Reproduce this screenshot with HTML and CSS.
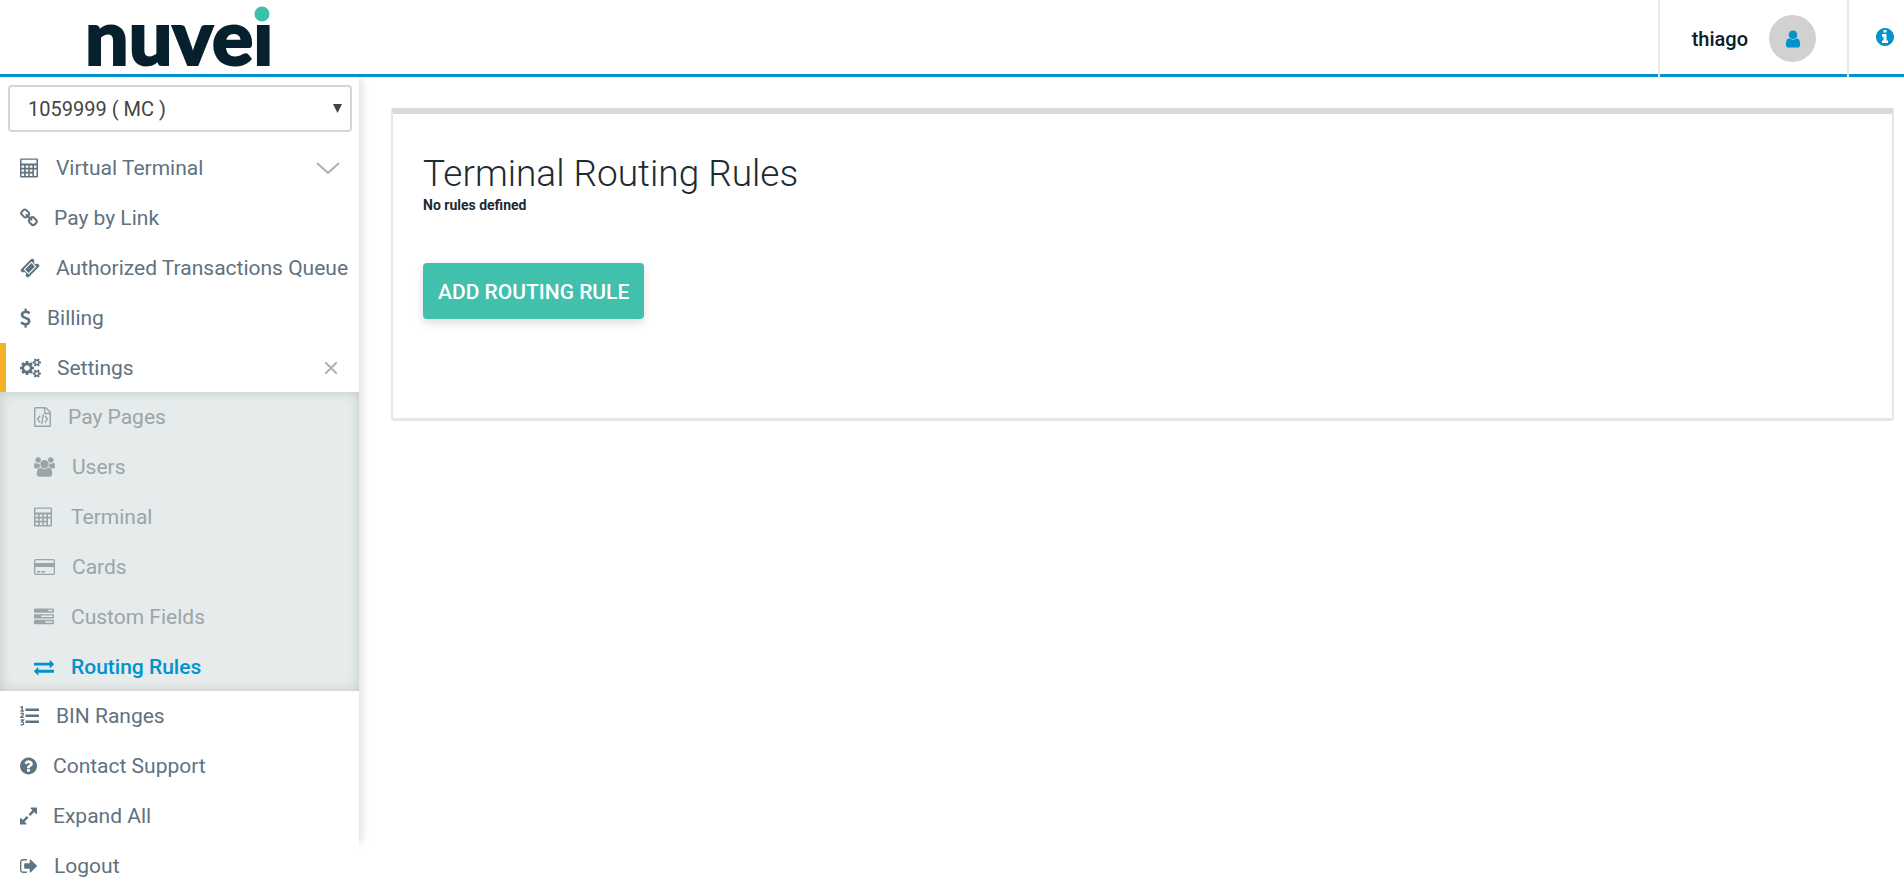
FILE: index.html
```html
<!DOCTYPE html>
<html lang="en">
<head>
<meta charset="utf-8">
<title>Terminal Routing Rules</title>
<meta name="viewport" content="width=device-width, initial-scale=1">
<link rel="stylesheet" href="styles.css">
</head>
<body>
<svg class="sprite" aria-hidden="true">
  <symbol id="calculator" viewBox="0 0 20 20"><path fill-rule="evenodd" d="M1 0.500h16a1 1 0 0 1 1 1v17a1 1 0 0 1-1 1H1a1 1 0 0 1-1-1v-17a1 1 0 0 1 1-1zM1.500 1.800v3.700h15V1.800zM1.500 7.500v2.300h2.600V7.500zM5.700 7.500v2.300h2.600V7.500zM9.800 7.500v2.300h2.600V7.500zM14 7.500v2.300h2.500V7.500zM1.500 11.500v2.300h2.600v-2.300zM5.700 11.500v2.300h2.600v-2.300zM9.800 11.500v2.300h2.600v-2.300zM14 11.500v6.500h2.500v-6.500zM1.500 15.600V18h2.600v-2.400zM5.700 15.600V18h2.600v-2.400zM9.800 15.600V18h2.600v-2.400z"/></symbol>
  <symbol id="link" viewBox="64 0 1664 1792"><path d="M1520 1216q0-40-28-68l-208-208q-28-28-68-28-42 0-72 32 3 3 19 18.500t21.500 21.500 15 19 13 25.500 3.500 27.500q0 40-28 68t-68 28q-15 0-27.500-3.500t-25.500-13-19-15-21.500-21.500-18.500-19q-33 31-33 73 0 40 28 68l206 207q27 27 68 27 40 0 68-26l147-146q28-28 28-67zm-703-705q0-40-28-68l-206-207q-28-28-68-28-39 0-68 27l-147 146q-28 28-28 67 0 40 28 68l208 208q27 27 68 27 42 0 72-31-3-3-19-18.500t-21.500-21.500-15-19-13-25.500-3.500-27.500q0-40 28-68t68-28q15 0 27.500 3.500t25.500 13 19 15 21.500 21.500 18.500 19q33-31 33-73zm895 705q0 120-85 203l-147 146q-83 83-203 83-121 0-204-85l-206-207q-83-83-83-203 0-123 88-209l-88-88q-86 88-208 88-120 0-204-84l-208-208q-84-84-84-204t85-203l147-146q83-83 203-83 121 0 204 85l206 207q83 83 83 203 0 123-88 209l88 88q86-88 208-88 120 0 204 84l208 208q84 84 84 204z"/></symbol>
  <symbol id="ticket" viewBox="0 0 1792 1792"><path d="M1024 452l316 316-572 572-316-316zm-211 979l618-618q19-19 19-45t-19-45l-362-362q-18-18-45-18t-45 18l-618 618q-19 19-19 45t19 45l362 362q18 18 45 18t45-18zm889-637l-907 908q-37 37-90.500 37t-90.500-37l-126-126q56-56 56-136t-56-136-136-56-136 56l-125-126q-37-37-37-90.500t37-90.500l907-906q37-37 90.500-37t90.500 37l125 125q-56 56-56 136t56 136 136 56 136-56l126 125q37 37 37 90.500t-37 90.500z"/></symbol>
  <symbol id="dollar" viewBox="384 0 1024 1792"><path d="M1362 1185q0 153-99.500 263.500t-258.500 136.500v175q0 14-9 23t-23 9h-135q-13 0-22.500-9.500t-9.500-22.500v-175q-66-9-127.500-31t-101.500-44.500-74-48-46.500-37.500-17.500-18q-17-21-2-41l103-135q7-10 23-12 15-2 24 9l2 2q113 99 243 125 37 8 74 8 81 0 142.500-43t61.500-122q0-28-15-53t-33.500-42-58.500-37.500-66-32-80-32.500q-39-16-61.500-25t-61.500-26.500-62.500-31-56.500-35.500-53.500-42.500-43.500-49-35.500-58-21-66.500-8.500-78q0-138 98-242t255-134v-180q0-13 9.500-22.500t22.500-9.500h135q14 0 23 9t9 23v176q57 6 110.500 23t87 33.500 63.500 37.500 39 29 15 14q17 18 5 38l-81 146q-8 15-23 16-14 3-27-7-3-3-14.500-12t-39-26.500-58.500-32-74.500-26-85.500-11.500q-95 0-155 43t-60 111q0 26 8.500 48t29.500 41.500 39.500 33 56 31 60.500 27 70 27.500q53 20 81 31.500t76 35 75.500 42.500 62 50 53 63.500 31.500 76.500 13 94z"/></symbol>
  <symbol id="cogs" viewBox="-64 0 1920 1792"><path d="M832 896q0-106-75-181t-181-75-181 75-75 181 75 181 181 75 181-75 75-181zm768 512q0-52-38-90t-90-38-90 38-38 90q0 53 37.500 90.500t90.500 37.500 90.500-37.500 37.500-90.500zm0-1024q0-52-38-90t-90-38-90 38-38 90q0 53 37.500 90.500t90.500 37.500 90.500-37.500 37.500-90.500zm-384 421v185q0 10-7 19.500t-16 10.500l-155 24q-11 35-32 76 34 48 90 115 7 11 7 20 0 12-7 19-23 30-82.500 89.500t-78.500 59.500q-11 0-21-7l-115-90q-37 19-77 31-11 108-23 155-7 24-30 24h-186q-11 0-20-7.500t-10-17.500l-23-153q-34-10-75-31l-118 89q-7 7-20 7-11 0-21-8-144-133-144-160 0-9 7-19 10-14 41-53t47-61q-23-44-35-82l-152-24q-10-1-17-9.500t-7-19.500v-185q0-10 7-19.500t16-10.500l155-24q11-35 32-76-34-48-90-115-7-11-7-20 0-12 7-20 22-30 82-89t79-59q11 0 21 7l115 90q34-18 77-32 11-108 23-154 7-24 30-24h186q11 0 20 7.500t10 17.500l23 153q34 10 75 31l118-89q8-7 20-7 11 0 21 8 144 133 144 160 0 8-7 19-12 16-42 54t-45 60q23 48 34 82l152 23q10 2 17 10.500t7 19.500zm640 533v140q0 16-149 31-12 27-30 52 51 113 51 138 0 4-4 7-122 71-124 71-8 0-46-47t-52-68q-20 2-30 2t-30-2q-14 21-52 68t-46 47q-2 0-124-71-4-3-4-7 0-25 51-138-18-25-30-52-149-15-149-31v-140q0-16 149-31 13-29 30-52-51-113-51-138 0-4 4-7 4-2 35-20t59-34 30-16q8 0 46 46.500t52 67.500q20-2 30-2t30 2q51-71 92-112l6-2q4 0 124 70 4 3 4 7 0 25-51 138 17 23 30 52 149 15 149 31zm0-1024v140q0 16-149 31-12 27-30 52 51 113 51 138 0 4-4 7-122 71-124 71-8 0-46-47t-52-68q-20 2-30 2t-30-2q-14 21-52 68t-46 47q-2 0-124-71-4-3-4-7 0-25 51-138-18-25-30-52-149-15-149-31v-140q0-16 149-31 13-29 30-52-51-113-51-138 0-4 4-7 4-2 35-20t59-34 30-16q8 0 46 46.500t52 67.500q20-2 30-2t30 2q51-71 92-112l6-2q4 0 124 70 4 3 4 7 0 25-51 138 17 23 30 52 149 15 149 31z"/></symbol>
  <symbol id="file-code" viewBox="128 0 1536 1792"><path d="M1596 380q28 28 48 76t20 88v1152q0 40-28 68t-68 28h-1344q-40 0-68-28t-28-68v-1600q0-40 28-68t68-28h896q40 0 88 20t76 48zm-444-244v376h376q-10-29-22-41l-313-313q-12-12-41-22zm384 1528v-1024h-416q-40 0-68-28t-28-68v-416h-768v1536h1280z"/><path d="M608 768q8-11 21-12.500t24 6.500l51 38q11 8 12.500 21t-6.500 24l-182 243 182 243q8 11 6.500 24t-12.500 21l-51 38q-11 8-24 6.500t-21-12.500l-226-301q-14-19 0-38zM1410 1069q14 19 0 38l-226 301q-8 11-21 12.500t-24-6.500l-51-38q-11-8-12.500-21t6.500-24l182-243-182-243q-8-11-6.500-24t12.500-21l51-38q11-8 24-6.500t21 12.500zM790 1530q-13-2-20.500-13t-5.500-24l138-831q2-13 13-20.500t24-5.500l63 10q13 2 20.500 13t5.500 24l-138 831q-2 13-13 20.500t-24 5.500z"/></symbol>
  <symbol id="users" viewBox="64 0 1920 1792"><path d="M657 896q-162 5-265 128h-134q-82 0-138-40.500t-56-118.500q0-353 124-353 6 0 43.500 21t97.500 42.500 119 21.500q67 0 133-23-5 37-5 66 0 159 81 256zm1071 637q0 120-73 189.500t-194 69.500h-874q-121 0-194-69.500t-73-189.500q0-53 3.500-103.500t14-109 26.500-108.500 43-97.500 62-81 85.500-53.500 111.500-20q10 0 43 21.500t73 48 107 48 135 21.500 135-21.500 107-48 73-48 43-21.500q61 0 111.500 20t85.500 53.500 62 81 43 97.500 26.500 108.500 14 109 3.500 103.500zm-1024-1277q0 106-75 181t-181 75-181-75-75-181 75-181 181-75 181 75 75 181zm704 384q0 159-112.500 271.500t-271.500 112.500-271.500-112.500-112.500-271.500 112.500-271.500 271.500-112.500 271.500 112.500 112.500 271.500zm576 225q0 78-56 118.500t-138 40.500h-134q-103-123-265-128 81-97 81-256 0-29-5-66 66 23 133 23 59 0 119-21.500t97.500-42.500 43.500-21q124 0 124 353zm-128-609q0 106-75 181t-181 75-181-75-75-181 75-181 181-75 181 75 75 181z"/></symbol>
  <symbol id="card" viewBox="0 0 21 20"><path fill-rule="evenodd" d="M2 2h17a2 2 0 0 1 2 2v12a2 2 0 0 1-2 2H2a2 2 0 0 1-2-2V4a2 2 0 0 1 2-2zM2 3.300q-.7 0-.7.700v2h18.400V4q0-.7-.7-.7zM1.300 10v6q0 .7.700.700h17q.7 0 .7-.7v-6zM3 14h3v1.400H3zM7 14h4v1.400H7z"/></symbol>
  <symbol id="tasks" viewBox="0 0 1792 1792"><path d="M1024 1408h640v-128h-640v128zm-384-512h1024v-128h-1024v128zm640-512h384v-128h-384v128zm512 832v256q0 26-19 45t-45 19h-1664q-26 0-45-19t-19-45v-256q0-26 19-45t45-19h1664q26 0 45 19t19 45zm0-512v256q0 26-19 45t-45 19h-1664q-26 0-45-19t-19-45v-256q0-26 19-45t45-19h1664q26 0 45 19t19 45zm0-512v256q0 26-19 45t-45 19h-1664q-26 0-45-19t-19-45v-256q0-26 19-45t45-19h1664q26 0 45 19t19 45z"/></symbol>
  <symbol id="exchange" viewBox="0 0 1792 1792"><path d="M1792 1184v192q0 13-9.500 22.500t-22.500 9.500h-1376v192q0 13-9.500 22.500t-22.500 9.500q-12 0-24-10l-319-320q-9-9-9-22 0-14 9-23l320-320q9-9 23-9 13 0 22.500 9.500t9.500 22.500v192h1376q13 0 22.500 9.500t9.500 22.500zm0-544q0 14-9 23l-320 320q-9 9-23 9-13 0-22.500-9.500t-9.500-22.500v-192h-1376q-13 0-22.500-9.500t-9.500-22.500v-192q0-13 9.500-22.500t22.500-9.500h1376v-192q0-14 9-23t23-9q12 0 24 10l319 319q9 9 9 23z"/></symbol>
  <symbol id="list" viewBox="0 0 20 20"><path d="M5.500 2.500H19v2.500H5.500zM5.500 8.500H19V11H5.500zM5.500 14.500H19V17H5.500z"/><path fill="none" stroke="currentColor" stroke-width="1.400" d="M.5 1.500L2.200.8v4M.5 5h3.300M.6 7.800q2.700-1.200 2.700.4 0 .8-2.600 3.100h3M.6 14h2.800l-1.500 1.900q1.700 0 1.700 1.500 0 2-3.100 1.300"/></symbol>
  <symbol id="question" viewBox="128 0 1536 1792"><path d="M1024 1376v-192q0-14-9-23t-23-9h-192q-14 0-23 9t-9 23v192q0 14 9 23t23 9h192q14 0 23-9t9-23zm256-672q0-88-55.500-163t-138.500-116-170-41q-243 0-371 213-15 24 8 42l132 100q7 6 19 6 16 0 25-12 53-68 86-92 34-24 86-24 48 0 85.500 26t37.500 59q0 38-20 61t-68 45q-63 28-115.500 86.500t-52.500 125.500v36q0 14 9 23t23 9h192q14 0 23-9t9-23q0-19 21.500-49.500t54.500-49.500q32-18 49-28.500t46-35 44.500-48 28-60.500 12.500-81zm384 192q0 209-103 385.500t-279.500 279.500-385.500 103-385.500-103-279.500-279.500-103-385.500 103-385.500 279.500-279.500 385.500-103 385.500 103 279.500 279.500 103 385.500z"/></symbol>
  <symbol id="expand" viewBox="128 0 1536 1792"><path d="M883 1056q0 13-10 23l-332 332 144 144q19 19 19 45t-19 45-45 19h-448q-26 0-45-19t-19-45v-448q0-26 19-45t45-19 45 19l144 144 332-332q10-10 23-10t23 10l114 114q10 10 10 23zm781-864v448q0 26-19 45t-45 19-45-19l-144-144-332 332q-10 10-23 10t-23-10l-114-114q-10-10-10-23t10-23l332-332-144-144q-19-19-19-45t19-45 45-19h448q26 0 45 19t19 45z"/></symbol>
  <symbol id="logout" viewBox="64 0 1664 1792"><path d="M704 1440q0 4 1 20t.5 26.500-3 23.500-10 19.500-20.500 6.500h-320q-119 0-203.500-84.500t-84.500-203.500v-704q0-119 84.500-203.500t203.500-84.500h320q13 0 22.500 9.500t9.500 22.500q0 4 1 20t.5 26.500-3 23.500-10 19.500-20.500 6.500h-320q-66 0-113 47t-47 113v704q0 66 47 113t113 47h312l11.500 1 11.500 3 8 5.500 7 9 2 13.500zm928-544q0 26-19 45l-544 544q-19 19-45 19t-45-19-19-45v-288h-448q-26 0-45-19t-19-45v-384q0-26 19-45t45-19h448v-288q0-26 19-45t45-19 45 19l544 544q19 19 19 45z"/></symbol>
  <symbol id="user" viewBox="0 0 1792 1792"><path d="M1536 1399q0 109-62.500 187t-150.500 78h-854q-88 0-150.500-78t-62.500-187q0-85 8.500-160.500t31.500-152 58.500-131 94-89 134.500-34.500q131 128 313 128t313-128q76 0 134.500 34.500t94 89 58.500 131 31.500 152 8.500 160.500zm-256-887q0 159-112.500 271.500t-271.500 112.500-271.500-112.500-112.500-271.500 112.500-271.500 271.500-112.500 271.500 112.500 112.500 271.500z"/></symbol>
  <symbol id="info" viewBox="128 128 1536 1536"><path d="M1152 1376v-160q0-14-9-23t-23-9h-96v-512q0-14-9-23t-23-9h-320q-14 0-23 9t-9 23v160q0 14 9 23t23 9h96v320h-96q-14 0-23 9t-9 23v160q0 14 9 23t23 9h448q14 0 23-9t9-23zm-128-896v-160q0-14-9-23t-23-9h-192q-14 0-23 9t-9 23v160q0 14 9 23t23 9h192q14 0 23-9t9-23zm640 416q0 209-103 385.500t-279.500 279.500-385.500 103-385.500-103-279.500-279.500-103-385.500 103-385.500 279.500-279.500 385.500-103 385.500 103 279.500 279.500 103 385.500z"/></symbol>
</svg>

<header class="topbar">
  <a class="brand" href="#" aria-label="nuvei">
    <svg class="logo" viewBox="0 0 182 70" role="img" aria-label="nuvei">
      <text class="logo-word" x="-4" y="59">nuvei</text>
      <rect x="160" y="-6" width="26" height="24" fill="#fff"/>
      <circle cx="173" cy="8" r="7.500" fill="#3dbfac"/>
    </svg>
  </a>
  <a class="account" href="#">
    <span>thiago</span>
    <span class="avatar"><svg class="w20"><use href="#user"/></svg></span>
  </a>
  <button class="help" type="button" aria-label="Information"><svg class="w18"><use href="#info"/></svg></button>
</header>

<div class="layout">
  <aside class="sidebar">
    <div class="merchant">
      <select aria-label="Merchant account"><option>1059999 ( MC )</option></select>
      <svg class="caret" viewBox="0 0 10 10"><path d="M0 0h10L5 10z"/></svg>
    </div>
    <nav aria-label="Main">
      <ul class="menu">
        <li><a href="#"><svg class="w20"><use href="#calculator"/></svg><span>Virtual Terminal</span>
          <svg class="chevron" viewBox="0 0 24 12"><path d="M1 1l11 10L23 1"/></svg></a></li>
        <li><a href="#"><svg class="w18 tall"><use href="#link"/></svg><span>Pay by Link</span></a></li>
        <li><a href="#"><svg class="w20"><use href="#ticket"/></svg><span>Authorized Transactions Queue</span></a></li>
        <li><a href="#"><svg class="w11"><use href="#dollar"/></svg><span>Billing</span></a></li>
        <li class="open"><a href="#"><svg class="w21"><use href="#cogs"/></svg><span>Settings</span>
          <svg class="close" viewBox="0 0 12 12"><path d="M0 0l12 12M12 0L0 12"/></svg></a>
          <ul class="submenu">
            <li><a href="#"><svg class="w17"><use href="#file-code"/></svg><span>Pay Pages</span></a></li>
            <li><a href="#"><svg class="w21"><use href="#users"/></svg><span>Users</span></a></li>
            <li><a href="#"><svg class="w20"><use href="#calculator"/></svg><span>Terminal</span></a></li>
            <li><a href="#"><svg class="w21"><use href="#card"/></svg><span>Cards</span></a></li>
            <li><a href="#"><svg class="w20"><use href="#tasks"/></svg><span>Custom Fields</span></a></li>
            <li><a class="current" href="#" aria-current="page"><svg class="w20"><use href="#exchange"/></svg><span>Routing Rules</span></a></li>
          </ul>
        </li>
        <li><a href="#"><svg class="w20"><use href="#list"/></svg><span>BIN Ranges</span></a></li>
        <li><a href="#"><svg class="w17"><use href="#question"/></svg><span>Contact Support</span></a></li>
        <li><a href="#"><svg class="w17"><use href="#expand"/></svg><span>Expand All</span></a></li>
        <li><a href="#"><svg class="w18 tall"><use href="#logout"/></svg><span>Logout</span></a></li>
      </ul>
    </nav>
  </aside>

  <main class="content">
    <section class="card">
      <h1>Terminal Routing Rules</h1>
      <p class="empty">No rules defined</p>
      <button class="primary" type="button">ADD ROUTING RULE</button>
    </section>
  </main>
</div>
</body>
</html>
```

FILE: styles.css
```css
* { box-sizing: border-box; }

body {
  margin: 0;
  background: #fff;
  color: #1d2b33;
  font: 400 21px/24px Roboto, "Liberation Sans", sans-serif;
}

a { color: inherit; text-decoration: none; }
ul { margin: 0; padding: 0; list-style: none; }
svg { display: block; flex: none; fill: currentColor; }
.sprite { position: absolute; width: 0; height: 0; }

.w11 { width: 11px; height: 20px; }
.w17 { width: 17px; height: 20px; }
.w18 { width: 18px; height: 18px; }
.w18.tall { height: 20px; }
.w20 { width: 20px; height: 20px; }
.w21 { width: 21px; height: 20px; }

/* Top bar */
.topbar {
  position: relative;
  z-index: 1;
  display: flex;
  height: 77px;
  background: #fff;
}
.topbar > * { box-shadow: inset 0 -3px #0093cc; }
.brand { flex: 1; padding: 6px 0 0 89px; }
.logo { width: 182px; height: 70px; overflow: visible; }
.logo-word {
  fill: #07202e;
  stroke: #07202e;
  stroke-width: 2;
  font: 900 77px Lato, sans-serif;
}
.account,
.help {
  display: flex;
  align-items: center;
  border: 0;
  border-left: 2px solid #e8e8e8;
}
.account {
  gap: 21px;
  padding: 0 31px 0 32px;
  color: #07202e;
  font-size: 20px;
  font-weight: 500;
}
.avatar {
  display: grid;
  place-items: center;
  width: 47px;
  height: 47px;
  border-radius: 50%;
  background: #d1d1d1;
  color: #0093cc;
}
.help { padding: 0 10px 3px 27px; background: none; color: #0093cc; }

/* Sidebar */
.layout { display: flex; align-items: flex-start; }
.sidebar {
  position: relative;
  z-index: 0;
  flex: none;
  width: 359px;
  color: #5f7280;
}
/* The edge shadow fades out before the last menu entry */
.sidebar::before {
  content: "";
  position: absolute;
  z-index: -1;
  inset: 0 0 46px;
  box-shadow: 4px 0 8px -1px rgba(0, 0, 0, .12);
}
.merchant { position: relative; padding: 8px 7px 11px 8px; }
.merchant select {
  display: block;
  width: 100%;
  height: 47px;
  padding: 0 30px 0 18px;
  border: 2px solid #d6d6d6;
  border-radius: 4px;
  appearance: none;
  background: #fff;
  color: #444;
  font: inherit;
  font-size: 20px;
}
.caret {
  position: absolute;
  top: 27px;
  right: 17px;
  width: 9px;
  height: 9px;
  fill: #444;
  pointer-events: none;
}
.menu { background: #fff; }
.menu a {
  display: flex;
  align-items: center;
  gap: 16px;
  height: 50px;
  padding: 0 19px 0 20px;
  white-space: nowrap;
}
.chevron,
.close { margin-left: auto; fill: none; stroke: #b0b0b0; stroke-width: 2; }
.chevron { width: 24px; height: 12px; }
.close { width: 12px; height: 12px; margin-right: 3px; }
.menu .open > a { height: 49px; padding-left: 14px; border-left: 6px solid #f5b123; }
.menu > li:last-child a { height: 49px; }
.submenu {
  background: #e6ebeb;
  box-shadow: inset 0 0 12px rgba(0, 0, 0, .16);
  color: #9aa5aa;
}
.submenu a { gap: 17px; padding-left: 34px; }
.submenu .current { height: 49px; color: #0093cc; font-weight: 500; }

/* Content */
.content { flex: 1; min-width: 0; padding: 31px 10px 0 32px; }
.card {
  padding: 40px 30px 99px;
  border: 2px solid #e6e6e6;
  border-top: 6px solid #d9d9d9;
  border-bottom-width: 3px;
  border-radius: 3px;
}
h1 { margin: 0; font-size: 37px; font-weight: 300; line-height: 40px; }
.empty { margin: 0 0 47px; font-size: 14px; font-weight: 700; line-height: 22px; }
.primary {
  height: 56px;
  padding: 2px 15px 0;
  border: 0;
  border-radius: 4px;
  background: #41c1ac;
  box-shadow: 0 4px 10px rgba(0, 0, 0, .14);
  color: #fff;
  font: inherit;
  font-weight: 500;
}
```
